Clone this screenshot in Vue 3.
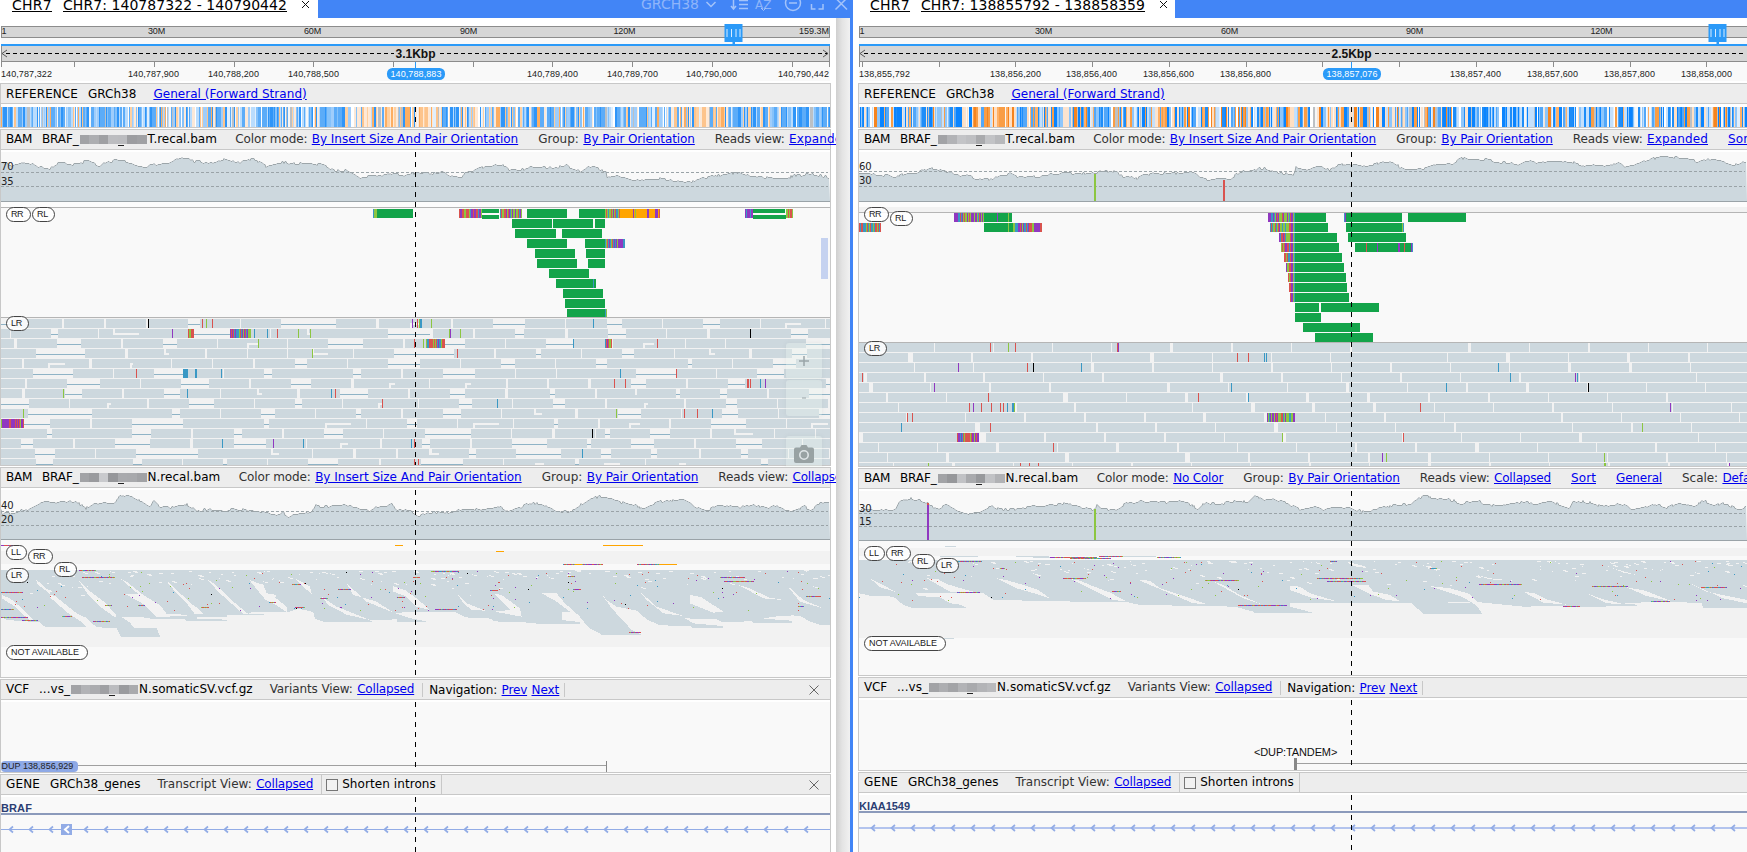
<script setup>
const C = { r: '#d9534f', g: '#8cc641', b: '#3a98c4', p: '#9038c0', k: '#000000', G: '#13a44a', o: '#ffa500', a: '#cdd8de', w: '#f2f2f2', l: '#8fb3c6' }

// Spreads glyphs so that a run is as wide as one with whole-pixel advances.
const vSnap = {
  mounted(el) {
    const cs = getComputedStyle(el)
    const text = el.textContent
    if (!text.length) return
    const ctx = document.createElement('canvas').getContext('2d')
    ctx.font = `${cs.fontWeight} ${cs.fontSize} ${cs.fontFamily}`
    let diff = 0
    for (const ch of text) {
      const w = ctx.measureText(ch).width
      diff += Math.round(w) - w
    }
    el.style.letterSpacing = (diff / text.length).toFixed(3) + 'px'
  },
}

function rng(seed) {
  let s = seed
  return () => {
    s = (s * 1664525 + 1013904223) % 4294967296
    return s / 4294967296
  }
}

// Collects rectangles and groups them in one path per colour run.
function layer() {
  const out = []
  return {
    out,
    rect(color, x, y, w, h) {
      const d = `M${x} ${y}h${w}v${h}h${-w}z`
      const last = out[out.length - 1]
      if (last && last.f === color) last.d += d
      else out.push({ f: color, d })
    },
    poly(color, pts) {
      out.push({ f: color, d: 'M' + pts.map((p) => p.join(' ')).join('L') + 'z' })
    },
  }
}

const parse = (ox, oy, text) => text.trim().split(/\s+/).map((t) => {
  const [x, y] = t.split(',').map(Number)
  return [(x + ox) / 3, y / 3 + oy]
})

function coverage(pts, base, x0, x1, seed) {
  const rand = rng(seed)
  const line = []
  let i = 0
  let jitter = 0
  for (let x = x0; x < x1; x++) {
    while (i < pts.length - 2 && pts[i + 1][0] < x) i++
    const [ax, ay] = pts[i]
    const [bx, by] = pts[i + 1]
    const t = Math.max(0, Math.min(1, (x - ax) / (bx - ax || 1)))
    if (rand() < 0.4) jitter = Math.round(rand() * 2.4 - 1.2)
    line.push(`${x} ${Math.round(ay + (by - ay) * t + jitter * 0.9) + 0.5}`)
  }
  return { line: 'M' + line.join('L'), area: `M${x0} ${base}L` + line.join('L') + `L${x1} ${base}z` }
}

function mixed(L, rand, x0, x1, y, h, pool = 'rgbprgbpg') {
  for (let x = Math.round(x0); x < Math.round(x1); x++) L.rect(C[pool[Math.floor(rand() * pool.length)]], x, y, 1, h)
}

// gap notation: start-end, with a trailing n for a notch in overlapping mates
function readRows(L, rows, ox, y0, linked, yMax) {
  rows.forEach((row, i) => {
    const y = y0 + i * 10
    row.split(' ').forEach((g) => {
      const notch = g.endsWith('n')
      const [s, e] = g.replace('n', '').split('-').map((v) => Math.round((+v + ox) / 3))
      const h = Math.min(9, yMax - y)
      if (notch) {
        L.rect(C.w, s, y + (h > 5 ? 4 : 3), e - s, 2)
        L.rect(C.w, s, i % 2 ? y : y + 4, Math.min(2, e - s), 5)
      } else {
        L.rect(C.w, s, y, e - s, h)
        if (linked && e - s >= 4) L.rect(C.l, s, y + 5, e - s, 1)
      }
    })
  })
}

function snips(L, text, ox, y0, yMax) {
  text.split(' ').forEach((t) => {
    const [r, x, c, w] = t.split(':')
    const y = y0 + r * 10
    L.rect(C[c], Math.round((+x + ox) / 3), y, w ? +w : 1, Math.min(9, yMax - y))
  })
}

// ---- first alignment track, left pane ----
const readsL = layer()
{
  const L = readsL
  const rand = rng(7)
  const green = ['1131-1239 1581-1701 1737-1815', '1536-1656 1659-1779 1785-1815', '1545-1668 1686-1806', '1581-1701 1755-1815', '1605-1725 1758-1815', '1611-1731 1764-1815', '1647-1767', '1668-1788', '1689-1809', '1695-1815', '1701-1815']
  green.forEach((row, i) => row.split(' ').forEach((g) => {
    const [s, e] = g.split('-').map(Number)
    L.rect(C.G, s / 3, 209 + i * 10, (e - s) / 3, 9)
  }))
  L.rect(C.G, 482, 209, 17, 4); L.rect(C.G, 482, 215, 17, 4)
  L.rect(C.G, 753, 209, 32, 4); L.rect(C.G, 753, 215, 33, 4)
  mixed(L, rand, 373, 377, 209, 9)
  mixed(L, rand, 459, 482, 209, 9)
  mixed(L, rand, 500, 522, 209, 9, 'rggpgb')
  mixed(L, rand, 605, 620, 209, 9)
  L.rect(C.o, 620, 209, 40, 9)
  L.rect(C.p, 633, 209, 1, 9); L.rect(C.g, 635, 209, 1, 9); L.rect(C.p, 647, 209, 2, 9); L.rect(C.p, 655, 209, 3, 9); L.rect(C.r, 659, 209, 1, 9)
  mixed(L, rand, 745, 753, 209, 9, 'rppb')
  mixed(L, rand, 786, 793, 209, 9, 'rrg')
  mixed(L, rand, 605, 619, 239, 9)
  L.rect(C.p, 619, 239, 4, 9); L.rect(C.b, 623, 239, 2, 9)
  L.rect(C.b, 593, 279, 1, 9); L.rect(C.b, 605, 309, 1, 9); L.rect(C.g, 606, 309, 1, 9)
  L.rect('#f2f2f2', 1, 318, 829, 147)
  for (let i = 0; i < 15; i++) L.rect(C.a, 1, 319 + i * 10, 829, i === 14 ? 6 : 9)
  readRows(L, [
    '3-40 186-192 312-318 438-444 564-600 720-723 843-1008 1128-1137 1230-1257n', '30-33 153-174 294-297 339-417n 582-690 810-813 921-933n 1164-1299',
    '42-51 171-243 363-369 489-531 651-654 740-777n 861-864 984-1089 1209-1215', '108-255 375-384 492-507n 615-621 741-744 861-864 936-984n 1059-1062 1182-1290',
    '66-72 144-195n 267-276 390-399n 513-516 636-639 759-765 885-921 1041-1044 1164-1260', '99-219 339-342 462-549 669-672 792-816 1059-1083 1203-1209',
    '75-81 201-300 420-423 543-627 747-753 873-933 1053-1062 1167-1185n 1287-1290', '66-75 195-246 366-372 492-540 660-663 771-786n 891-900 1020-1104 1224-1230',
    '3-87 207-210 321-333n 441-447 567-642 762-765 885-906 1026-1029 1134-1149n 1254-1257', '84-276 516-540 660-663 783-825 945-948 1068-1083 1203-1209',
    '72-150 270-276 396-549 792-807 975-1053n 1098-1101 1221-1251', '141-156 396-453 573-579 702-726 846-852 972-1029 1149-1152 1275-1290',
    '63-99 219-225 345-450 570-579 702-798 918-921 1020-1044n 1140-1146 1266-1290', '105-165 285-288 408-594 813-837n 936-939 1059-1068 1188-1194 1287-1317n',
    '108-159 399-426 546-549 669-681 801-804 924-1014 1137-1143 1263-1290'], 0, 319, true, 465)
  readRows(L, [
    '63-69 189-285 405-408 531-576 696-699 819-870 990-993 1065-1113n 1185-1188', '0-9 129-135 255-282 405-414 534-588 708-711 831-840 1083-1134',
    '45-105 225-228 348-429 546-549 639-672n 765-768 885-888 1128-1200', '0-72 192-198 318-333 453-456 576-612 732-735 837-855n 957-966 1086-1131',
    '90-93 213-255 375-378 498-531 774-786 906-909 1029-1098', '39-135 255-258 378-381 618-738 858-861 981-1062',
    '105-123n 228-234 351-357 474-483 603-648 768-774 894-945 1188-1200', '60-105 225-234 360-375 495-501 615-621n 738-750 870-891 1011-1017 1137-1200',
    '87-126 246-249 369-405 525-531 642-654n 762-768 888-921 1041-1044 1194-1200', '39-93 213-216 312-336n 435-444 564-633 753-756 876-924 1044-1047 1167-1200',
    '81-84 129-207n 249-252 372-384 504-510 597-630n 717-723 843-948 1068-1071 1143-1194n', '0-123 243-246 366-375 495-498 525-540 660-720 840-846 912-969n 1032-1035 1155-1158',
    '120-126 246-351 471-483 603-672 792-798 918-996 1116-1119', '0-27n 117-138 258-393 513-543 663-681 807-813 933-954 1074-1077 1197-1200',
    '0-99 219-222 315-342n 435-447 522-570n 645-648 747-768n 993-1014'], 1290, 319, true, 465)
  snips(L, '0:444:k 0:606:r 0:618:g 0:636:r 0:1236:p 0:1251:r 0:1257:g 0:1260:b:2 0:1293:g 1:516:p 1:762:b 1:801:b 1:831:r 1:894:g 1:930:g 2:774:g 2:1242:r 2:1269:g 3:936:g 5:408:r 5:549:b:5 5:585:b:2 5:663:b 7:189:g 7:561:b 7:993:b 7:1005:r 8:1146:r 9:69:g 12:666:b 12:819:p 12:909:b 12:1233:b 12:1242:r 14:1242:r 14:1254:r', 0, 319, 465)
  snips(L, '0:489:b 1:57:g 1:60:p 1:90:g 1:960:k 2:429:b 2:681:r 3:81:r 5:570:b 5:738:r 6:552:r 6:585:r 6:951:r:2 6:960:r 6:990:b 6:1005:p 8:201:b 9:558:g 9:762:r 9:801:r 9:846:b 11:486:k 13:456:b', 1290, 319, 465)
  mixed(L, rand, 188, 194, 329, 9, 'brrgr'); mixed(L, rand, 230, 251, 329, 9); mixed(L, rand, 426, 445, 339, 9, 'rgbbpbr')
  mixed(L, rand, 605, 612, 339, 9); mixed(L, rand, 1, 24, 419, 9, 'pppgrrb'); L.rect(C.p, 2, 419, 7, 9); L.rect(C.p, 11, 419, 4, 9)
}

// ---- first alignment track, right pane ----
const readsR = layer()
{
  const L = readsR
  const rand = rng(21)
  const green = ['2952-3036 3885-3978 4038-4206 4224-4398', '2952-3039 3885-3984 4038-4206', '3885-4011 4044-4218', '3885-4017 4065-4239', '3885-4026', '3885-4032', '3885-4038', '3885-4041', '3885-4047', '3885-3957 3963-4137', '3885-3963', '3909-4080', '3945-4119']
  green.forEach((row, i) => row.split(' ').forEach((g) => {
    const [s, e] = g.split('-').map(Number)
    L.rect(C.G, s / 3, 213 + i * 10, (e - s) / 3, 9)
  }))
  ;[3804, 3810, 3837, 3843, 3852, 3858, 3864, 3867, 3873].forEach((s, i) => {
    mixed(L, rand, s / 3, 1290, 213 + i * 10, 9, i > 1 ? 'rgpbrg' : 'gpbgrg')
    L.rect(C.r, 1290, 213 + i * 10, 1, 9); L.rect(C.p, 1291, 213 + i * 10, 2, 9); L.rect(C.g, 1293, 213 + i * 10, 1, 9); L.rect(C.b, 1294, 213 + i * 10, 1, 9)
  })
  L.rect(C.p, 954, 213, 3, 9); mixed(L, rand, 957, 984, 213, 9); mixed(L, rand, 859, 881, 223, 9, 'brgbr'); mixed(L, rand, 1013, 1034, 223, 9); L.rect(C.p, 1034, 223, 6, 9); L.rect(C.r, 1040, 223, 2, 9)
  L.rect(C.p, 997, 213, 1, 9); L.rect(C.g, 1008, 213, 1, 9); L.rect(C.g, 1008, 223, 1, 9)
  L.rect(C.b, 1344, 213, 1, 9); L.rect(C.p, 1345, 213, 1, 9); L.rect(C.g, 1402, 223, 1, 9); L.rect(C.b, 1403, 223, 1, 9)
  snips(L, '3:228:r 3:261:p 3:323:p:2 3:342:r 3:363:p 3:366:b', 3870, 213, 400)
  L.rect('#f2f2f2', 859, 343, 888, 124)
  for (let i = 0; i < 13; i++) L.rect(C.a, 859, 343 + i * 10, 888, i === 12 ? 3 : 9)
  readRows(L, ['252-255 429-432 606-609 783-786 960-969 1143-1149', '174-189 363-369 543-549 723-726 900-912 1086-1089 1263-1266', '192-195 369-372 723-732 906-912 1086-1089 1263-1269', '42-51 222-228 399-405 579-582 756-762 1110-1119 1293-1299', '57-69 240-243 417-423 597-603 951-960 1134-1137 1311-1314', '108-114 288-291 639-654 828-831 1005-1014 1188-1194', '144-147 495-501 672-678 1026-1029 1203-1215', '168-171 345-348 522-528 702-708 882-888 1059-1068 1242-1251', '375-390 738-744 915-921 1095-1098 1272-1284', '27-39 387-408 582-588 762-768 942-948 1122-1125 1299-1308', '84-87 261-264 438-447 621-624 798-807 981-987 1161-1164', '111-114 288-297 645-657 1005-1020 1194-1200', '129-132 306-315 489-492 666-669 843-849 1023-1026 1200-1203'], 2550, 343, false, 466)
  readRows(L, ['3-6 180-186 534-543 717-720 894-900 1074-1077 1251-1254', '120-123 471-474 648-660 834-837 1011-1020 1194-1200', '123-126 300-306 480-483 657-660 834-843 1017-1026 1200-1203', '153-156 330-336 510-513 687-693 867-870 1218-1221', '168-177 351-354 528-534 708-717 891-894 1068-1071 1245-1248', '48-57 231-240 414-420 594-600 774-777 951-954 1128-1134', '66-75 249-258 432-435 609-612 786-792 966-969 1146-1149 1323-1326', '105-108 282-288 462-465 813-819 993-996 1170-1173 1347-1350', '138-141 315-318 492-498 846-849 1023-1029 1203-1206', '336-342 513-516 690-693 867-876 1224-1227', '18-21 195-201 375-381 555-567 741-744 918-921 1095-1101 1275-1278', '54-60 234-240 414-423 597-600 774-777 951-954 1128-1134 1308-1311', '57-63 237-240 414-423 597-603 777-780 954-960 1134-1140 1311-1317'], 3870, 343, false, 466)
  snips(L, '0:420:r 0:474:g 0:495:r 0:801:r 0:804:p 1:1161:r 1:1194:r 1:1242:b 1:1248:b 2:324:p 2:531:r 2:549:k 2:693:b 3:36:r 4:252:p 4:1143:b 5:414:r 5:1044:r 5:1194:b 6:357:r 6:369:p 6:393:r 6:423:r 6:450:r 6:459:r 6:471:b 6:486:b:2 6:492:g 7:171:r 7:186:r 8:153:b 8:420:r 9:1296:g 10:609:r 12:234:g 12:510:r 12:537:r 12:564:r', 2550, 343, 466)
  snips(L, '2:624:b 3:660:b 3:855:p 3:861:b 4:468:b 4:894:k 6:390:r 6:1140:p 8:1056:g 9:339:r 11:276:p 11:288:g 11:942:g 12:942:g:2 12:1317:p', 3870, 343, 466)
  mixed(L, rand, 1267, 1295, 413, 9, 'rggpbpg'); mixed(L, rand, 957, 979, 433, 9, 'grbprp')
}

// ---- collapsed alignment tracks ----
function collapsed({ seed, x0, x1, top, outline, slivers, strips, gx }) {
  const L = layer()
  const rand = rng(seed)
  L.poly(C.a, [[x0, top], ...outline, [x1, top]])
  slivers.forEach((s) => L.poly(C.w, s))
  for (let i = 0; i < (x1 - x0) / 6; i++) {
    const x = Math.floor(x0 + rand() * (x1 - x0))
    const y = Math.floor(top + 1 + rand() * rand() * 28)
    L.rect(C.w, x, y, 1 + Math.floor(rand() * 4), 1)
    if (rand() < 0.3) L.rect(C.w, x + 2, y + 1, 3, 1)
  }
  for (let i = 0; i < gx; i++) {
    const x = Math.floor(x0 + rand() * (x1 - x0))
    const y = Math.floor(top + 1 + rand() * 40)
    L.rect(C['rrbpgprbgk'[Math.floor(rand() * 9.2)]], x, y, 1, 1)
  }
  strips.trim().split(/\s+/).forEach((s) => {
    const [x, y, w, c] = s.split(',')
    const sx = Math.round(x / 3)
    const sy = 460 + Math.floor(y / 3)
    if (c) L.rect(C[c], sx, sy, Math.round(w / 3), 1)
    else mixed(L, rand, sx, sx + w / 3, sy, 1, 'rpgbrp')
  })
  return L
}
const both = (a, ox, b, ox2) => [...parse(ox, 460, a), ...parse(ox2, 460, b)]

const packL = collapsed({
  seed: 5, x0: 1, x1: 830, top: 570, gx: 170,
  outline: both('3,470 20,480 118,487 135,500 258,500 235,478 262,478 290,502 350,504 362,530 480,530 470,505 402,503 390,488 362,470 430,472 465,478 555,478 562,484 680,484 680,479 590,476 590,470 680,470 680,466 830,466 740,460 760,456 865,456 895,446 940,456 945,476 975,487 1120,487 1110,481 1190,478 1190,487 1290,487 1230,474 1180,458 1290,456', 0,
    '75,455 105,472 185,476 190,484 300,488 330,492 450,492 450,486 395,480 395,470 445,468 480,505 515,524 635,524 605,510 545,445 515,402 530,420 560,440 620,452 650,478 690,496 780,498 790,504 878,504 878,498 790,490 765,475 860,478 875,486 965,484 970,488 1085,488 1085,482 1000,476 1030,470 1090,466 1115,470 1140,485 1170,494 1200,494', 1290),
  slivers: [
    parse(0, 460, '5,405 30,415 60,440 105,484 90,482 45,440 5,415'), parse(0, 460, '150,405 165,408 230,460 262,475 250,490 205,460 150,412'),
    parse(0, 460, '235,360 272,395 312,425 350,465 345,472 300,440 262,400'), parse(0, 460, '360,355 380,365 430,405 480,435 500,462 585,465 470,472 430,432 375,402 415,402'),
    parse(0, 460, '492,355 530,390 575,432 600,450 610,463 585,463 560,430 520,388'), parse(0, 460, '620,357 640,370 675,400 700,425 745,462 730,462 660,400'),
    parse(0, 460, '748,360 790,375 800,400 830,405 825,412 860,440 860,456 830,436 795,418'), parse(0, 460, '885,355 930,380 935,402 915,385'),
    parse(0, 460, '965,410 1010,440 1060,460 1110,480 1040,464 985,435'), parse(0, 460, '1040,370 1060,405 1130,425 1180,458 1100,425'),
    parse(0, 460, '1178,378 1215,390 1250,415 1290,450 1250,440 1215,408 1180,395'), parse(0, 460, '108,358 150,395 150,402 112,372'),
    parse(1290, 460, '80,398 110,430 165,452 125,450 100,430'), parse(1290, 460, '190,400 215,405 270,445 275,470 195,455 240,450'),
    parse(1290, 460, '335,400 380,400 405,430 450,470 395,470 395,455 420,455 380,425'), parse(1290, 460, '630,395 680,440 760,468 700,460 650,420'),
    parse(1290, 460, '780,405 815,412 880,455 850,458 780,430'), parse(1290, 460, '925,375 960,385 1015,412 1060,420 1000,415'), parse(1290, 460, '1070,375 1120,420 1180,445 1110,425'),
    parse(1290, 460, '1120,330 1138,330 1130,336'), parse(1290, 460, '430,330 455,330 450,338'),
  ],
  strips: '237,331,52 245,352,100 3,397,65 3,448,38 3,472,80 65,481,48 185,469,30 280,484,52 315,436,20 415,436,20 603,442,25 875,373,28 1015,388,40 885,442,30 960,415,25 808,427,22 1190,412,25 1240,352,20 1293,333,84 1470,391,24 1305,448,65 1705,349,22 1720,388,25 1887,517,35 2172,364,90 2160,352,75 2418,409,45 2395,439,18 3,256,42 1185,256,24,o 1809,256,120,o 1488,274,24,o 1689,313,120 1725,313,20,o 1911,313,66 1977,313,54,o',
})

const packR = collapsed({
  seed: 11, x0: 859, x1: 1747, top: 560, gx: 150,
  outline: both('27,400 60,407 130,410 160,435 185,443 350,443 325,432 300,430 270,412 205,408 195,398 400,400 430,420 600,423 680,425 830,426 870,435 1060,438 1155,440 1210,455 1215,459 1320,459', 2550,
    '68,458 20,445 0,440 0,428 300,428 365,430 400,461 575,461 565,442 545,425 600,430 700,440 800,438 870,442 1058,436 1000,430 1130,424 1235,430 1240,443 1371,443', 3870),
  slivers: [
    parse(2550, 460, '230,355 265,358 290,372 350,390 395,400 300,395'), parse(2550, 460, '440,355 475,362 520,375 565,390 600,415 560,402 500,385'),
    parse(2550, 460, '665,358 690,362 720,375 780,398 830,424 790,420 740,395'), parse(2550, 460, '865,360 900,362 930,385 1000,408 1070,432 1030,430 960,400'),
    parse(2550, 460, '1090,365 1120,375 1170,405 1240,435 1180,415'), parse(2550, 460, '60,355 100,375 135,395 90,382'),
    parse(3870, 460, '0,378 30,380 60,400 100,412 140,424 60,412 0,390'), parse(3870, 460, '185,375 235,375 250,395 300,405 330,424 290,420 240,402'),
    parse(3870, 460, '420,378 480,385 540,402 560,425 620,434 560,436 515,410'), parse(3870, 460, '475,426 540,426 540,429 475,429'),
    parse(3870, 460, '700,395 735,400 770,418 830,434 760,428'), parse(3870, 460, '890,400 940,418 1000,432 950,430'), parse(3870, 460, '1010,382 1065,392 1145,424 1070,408'),
    parse(3870, 460, '1200,370 1250,395 1371,420 1371,430 1300,415'), parse(3870, 460, '170,305 222,318 228,324 190,318'), parse(3870, 460, '560,345 600,355 670,362 600,358'),
    parse(3870, 460, '395,315 450,328 440,332'), parse(3870, 460, '920,305 970,325 1040,345 1000,338'),
  ],
  strips: '2872,304,75 3150,292,140 3210,295,122 3298,289,75 3472,292,73 3190,355,68 2872,397,68 3335,394,28 3615,361,103 3715,436,148 3950,355,138 3982,364,118 4437,373,128 4775,379,108 5103,382,78 4688,439,52 4953,424,56 4290,325,20 3990,304,22 2835,259,33,a 2820,289,114,a 3048,289,100,a 3098,292,52,a 3370,289,100,a 2800,534,62,a 3000,325,14',
})

// ---- coverage ----
const cov = {
  l1: coverage([...parse(0, 0, '3,485 40,495 65,487 100,492 125,502 150,503 175,487 210,492 240,488 260,481 300,497 320,485 345,480 375,484 395,490 415,497 440,500 460,490 480,492 510,490 535,475 565,470 580,485 600,482 620,490 650,482 670,477 690,482 720,485 740,482 755,475 775,483 800,498 830,490 850,485 880,490 930,490 960,492 985,500 1005,512 1040,508 1060,517 1080,530 1130,527 1160,522 1190,518 1210,526 1250,516 1285,519'), ...parse(1290, 0, '0,521 40,516 60,527 95,531 105,517 130,512 160,500 190,496 225,494 235,506 260,508 290,505 300,499 340,500 370,503 410,495 425,505 450,513 475,496 495,502 528,512 531,531 560,527 600,540 640,538 670,534 700,534 725,541 765,545 800,541 830,530 870,524 930,517 960,524 1000,530 1070,535 1090,526 1150,521 1180,527 1200,532')], 201, 1, 830, 3),
  r1: coverage([...parse(2550, 0, '27,520 50,518 80,524 110,525 135,532 165,518 200,516 225,507 250,503 270,507 300,515 320,525 350,525 375,533 400,537 425,536 450,523 480,520 500,529 540,526 575,529 600,522 640,516 680,519 735,520 750,514 765,511 800,515 820,528 860,534 880,522 940,518 985,519 1010,512 1035,518 1055,534 1075,538 1110,530 1140,538 1170,513 1210,507 1245,503 1270,512 1315,521'), ...parse(3870, 0, '0,520 14,522 17,502 50,506 90,500 115,508 145,495 175,490 215,495 250,493 285,482 310,486 330,500 350,508 400,504 440,490 490,488 515,473 550,478 590,478 630,485 680,492 720,484 760,486 800,484 850,485 885,498 920,495 955,496 985,485 1005,498 1030,495 1070,478 1100,472 1150,470 1180,475 1210,476 1220,487 1260,476 1290,480 1330,492 1371,484')], 201, 859, 1747, 4),
  l2: coverage(both('3,145 5,160 40,157 60,150 95,146 105,137 135,122 170,128 210,124 235,128 258,143 275,133 320,128 345,130 358,104 380,106 400,113 430,127 450,135 462,120 482,142 520,142 560,132 580,143 590,152 630,145 670,152 700,145 750,150 800,158 840,166 848,156 868,170 885,162 935,155 945,136 980,138 1020,134 1075,142 1110,150 1130,138 1175,132 1190,146 1240,155 1255,166 1285,154', 0, '0,157 60,157 100,146 130,148 185,143 215,140 235,155 270,143 280,133 330,128 350,137 378,156 435,150 450,134 480,115 515,107 550,113 575,127 600,128 640,145 690,123 740,120 780,122 795,138 830,151 865,134 930,140 970,135 1000,142 1040,137 1060,145 1090,151 1125,138 1140,150 1165,130 1200,124', 1290), 539, 1, 830, 5),
  r2: coverage(both('27,148 60,148 90,147 110,151 135,148 150,125 180,113 210,120 235,127 260,148 288,131 325,153 360,163 390,155 425,138 450,147 500,147 540,137 570,136 620,131 650,129 690,142 730,148 740,134 755,147 800,146 830,128 880,123 940,126 990,124 1020,131 1045,146 1065,127 1110,130 1150,123 1195,122 1215,106 1240,120 1270,118 1290,123 1318,128', 2550, '0,133 30,148 70,140 100,147 140,140 170,143 220,153 260,146 300,137 360,130 400,107 440,113 490,120 510,129 570,121 580,133 640,135 700,123 740,130 790,125 838,142 848,121 910,127 930,137 1010,131 1025,148 1100,132 1130,144 1160,128 1215,138 1240,121 1270,132 1300,130 1345,145 1371,140', 3870), 540, 859, 1747, 6),
}

// ---- reference sequence ----
function sequence(seed, x0, x1, bias, strong) {
  const L = layer()
  const rand = rng(seed)
  const blue = strong ? ['#0a84ff', '#52a7f9', '#8ec6fb', '#c4e0fc', '#1e8df8'] : ['#2f95f8', '#5cacf8', '#86c2fa', '#b9dcfd', '#5cacf8', '#9fcdfb']
  const orange = strong ? ['#f5841f', '#ffb066', '#ffdfc2', '#fbe3cf', '#f99d45'] : ['#fdae61', '#ffd0a0', '#ffe9d6', '#fdc48c', '#fbe8d8']
  const neutral = ['#ffffff', '#bcc0c4', '#e0effd', '#f6f6f6']
  for (let x = x0; x < x1;) {
    const seg = bias.find((b) => x < b[0]) || bias[bias.length - 1]
    const q = rand()
    const set = q < 0.14 ? neutral : rand() < seg[1] ? orange : blue
    const w = Math.min(x1 - x, 1 + Math.floor(rand() * rand() * 3.4))
    L.rect(set[Math.floor(rand() * set.length)], x, 107, w, 20)
    x += w
  }
  return L
}
const seqL = sequence(31, 1, 830, [[60, 0.12], [155, 0.15], [215, 0.4], [290, 0.15], [345, 0.12], [440, 0.7], [455, 0.3], [500, 0.6], [560, 0.25], [640, 0.12], [665, 0.5], [725, 0.75], [770, 0.3], [830, 0.15]], false)
const seqR = sequence(77, 859, 1747, [[875, 0.4], [960, 0.3], [1016, 0.75], [1030, 0.2], [1150, 0.45], [1300, 0.45], [1380, 0.45], [1450, 0.35], [1600, 0.12], [1747, 0.25]], true)

const gray = (n, seed) => {
  const rand = rng(seed)
  return Array.from({ length: n }, () => {
    const v = 150 + Math.floor(rand() * 52)
    return `rgb(${v},${v + 1},${v + 4})`
  })
}

const link = (label, text) => ({ label, link: text })
const range = (a, b, s) => { const o = []; for (let v = a; v < b; v += s) o.push(v); return o }

const panes = [
  {
    id: 'left', x0: 1, x1: 830, tab: 'CHR7: 140787322 - 140790442', mid: 415,
    chrom: [[156.5, '30M'], [312.5, '60M'], [468.5, '90M'], [624.5, '120M']], chromEnd: '159.3M', handle: 725,
    span: '3.1Kbp', ticks: [1, 74, 154, 234, 313, 393, 473, 552, 632, 712, 792, 829],
    first: '140,787,322', last: '140,790,442',
    labels: [[153.5, '140,787,900'], [233.5, '140,788,200'], [313.5, '140,788,500'], [552.5, '140,789,400'], [632.5, '140,789,700'], [711.5, '140,790,000']],
    badge: [387, '140,788,883'],
    tracks: [
      { type: 'ref', y: 104, h: 23, name: 'REFERENCE', file: 'GRCh38', items: [link('', 'General (Forward Strand)')], seq: seqL.out },
      { type: 'bam', y: 150, h: 315, name: 'BAM', file: 'BRAF_', mosaic: gray(7, 2), tail: 'T.recal.bam', items: [link('Color mode:', 'By Insert Size And Pair Orientation'), link('Group:', 'By Pair Orientation'), link('Reads view:', 'Expanded')], cov: cov.l1, base: 201, guides: [172.5, 186.5], axis: [[170, '70'], [185, '35']], bands: [[202, 5, '#fcfcfc']], lines: [207, 317], reads: readsL.out, pills: [[6, 207, 25, 'RR'], [32, 207, 23, 'RL'], [6, 316, 23, 'LR']], controls: true },
      { type: 'bam', y: 488, h: 189, name: 'BAM', file: 'BRAF_', mosaic: gray(7, 9), tail: 'N.recal.bam', items: [link('Color mode:', 'By Insert Size And Pair Orientation'), link('Group:', 'By Pair Orientation'), link('Reads view:', 'Collapsed')], cov: cov.l2, base: 539, guides: [511.5, 525.5], axis: [[509, '40'], [523, '20']], bands: [[551, 13, '#f2f2f2'], [570, 77, '#f2f2f2']], lines: [], reads: packL.out, pills: [[6, 545, 21, 'LL'], [28, 549, 25, 'RR'], [54, 562, 23, 'RL'], [6, 568, 23, 'LR'], [6, 645, 82, 'NOT AVAILABLE']] },
      { type: 'vcf', y: 700, h: 72, name: 'VCF', file: '...vs_', mosaic: gray(7, 14), tail: 'N.somaticSV.vcf.gz', items: [link('Variants View:', 'Collapsed')], close: true },
      { type: 'gene', y: 795, h: 57, name: 'GENE', file: 'GRCh38_genes', items: [link('Transcript View:', 'Collapsed')], close: true, gene: 'BRAF', gy: 812, arrows: range(11, 830, 20).map((v) => (v > 60 ? v - 5 : v)).filter((v) => v < 60 || v > 80), ay: 829.5 },
    ],
  },
  {
    id: 'right', x0: 859, x1: 1747, tab: 'CHR7: 138855792 - 138858359', mid: 1351,
    chrom: [[1043.5, '30M'], [1229.5, '60M'], [1414.5, '90M'], [1601.5, '120M']], handle: 1709,
    span: '2.5Kbp', ticks: [859, 862, 939, 1015, 1092, 1169, 1246, 1322, 1399, 1476, 1553, 1630, 1706],
    first: '138,855,792',
    labels: [[1015.5, '138,856,200'], [1091.5, '138,856,400'], [1168.5, '138,856,600'], [1245.5, '138,856,800'], [1475.5, '138,857,400'], [1552.5, '138,857,600'], [1629.5, '138,857,800'], [1706.5, '138,858,000']],
    badge: [1323, '138,857,076'],
    tracks: [
      { type: 'ref', y: 104, h: 23, name: 'REFERENCE', file: 'GRCh38', items: [link('', 'General (Forward Strand)')], seq: seqR.out },
      { type: 'bam', y: 150, h: 316, name: 'BAM', file: 'BRAF_', mosaic: gray(7, 3), tail: 'T.recal.bam', items: [link('Color mode:', 'By Insert Size And Pair Orientation'), link('Group:', 'By Pair Orientation'), link('Reads view:', 'Expanded'), link('', 'Sort')], cov: cov.r1, base: 201, guides: [171.5, 186.5], axis: [[170, '60'], [184, '30']], bars: [[1094, 174, 27, C.g], [1223, 180, 21, C.r]], bands: [[202, 5, '#fcfcfc'], [207, 5, '#f2f2f2']], lines: [212, 342], reads: readsR.out, pills: [[864, 207, 25, 'RR'], [890, 211, 23, 'RL'], [864, 341, 23, 'LR']] },
      { type: 'bam', y: 489, h: 186, name: 'BAM', file: 'BRAF_', mosaic: gray(7, 19), tail: 'N.recal.bam', items: [link('Color mode:', 'No Color'), link('Group:', 'By Pair Orientation'), link('Reads view:', 'Collapsed'), link('', 'Sort'), link('', 'General'), link('Scale:', 'Default')], cov: cov.r2, base: 540, guides: [513.5, 526.5], axis: [[512, '30'], [525, '15']], bars: [[927, 505, 35, C.p], [927, 503, 2, C.r], [1094, 509, 31, C.g]], bands: [[548, 8, '#f2f2f2'], [560, 78, '#f2f2f2']], lines: [], reads: packR.out, pills: [[864, 546, 21, 'LL'], [886, 546, 25, 'RR'], [912, 554, 23, 'RL'], [936, 558, 23, 'LR'], [864, 636, 82, 'NOT AVAILABLE']] },
      { type: 'vcf', y: 698, h: 72, name: 'VCF', file: '...vs_', mosaic: gray(7, 24), tail: 'N.somaticSV.vcf.gz', items: [link('Variants View:', 'Collapsed')] },
      { type: 'gene', y: 793, h: 59, name: 'GENE', file: 'GRCh38_genes', items: [link('Transcript View:', 'Collapsed')], gene: 'KIAA1549', gy: 810, arrows: range(873, 1747, 20), ay: 828 },
    ],
  },
]
</script>

<template>
  <div class="browser">
    <section v-for="p in panes" :key="p.id" class="pane" :class="p.id">
      <div class="topbar">
        <div class="tab">
          <span v-snap class="chr">CHR7</span><span v-snap class="chr pos">{{ p.tab }}</span>
          <svg class="tabx" width="9" height="9" viewBox="0 0 9 9"><path d="M1 1l7 7M8 1l-7 7" stroke="#111" fill="none" /></svg>
        </div>
        <div v-if="p.id === 'left'" class="tools">
          <span class="build">GRCH38</span>
          <svg width="150" height="18" viewBox="702 0 150 18" fill="none" stroke="#a3c3fa" stroke-width="1.5">
            <path d="M706.500 2l4.500 4.500l4.500-4.500" />
            <path d="M733.500 0v8M731 6l2.500 3l2.500-3M739 0.500h9M739 4.500h9M739 8.500h9" />
            <text x="755" y="8.500" class="az">AZ</text>
            <path d="M761 8l2.500 2.500l2.500-2.500" stroke-width="1" />
            <circle cx="793" cy="3" r="7.500" /><path d="M789 3h8" />
            <path d="M811.500 4v5h4M818.500 9h4.500v-5" />
            <path d="M835.500-2l11.500 11.500M847-2l-11.500 11.500" />
          </svg>
        </div>
      </div>
      <div class="body">
        <div class="content">
          <svg class="ruler" :width="p.x1 - p.x0" height="65" :viewBox="`${p.x0} 18 ${p.x1 - p.x0} 65`">
            <rect :x="p.x0" y="38" :width="p.x1 - p.x0" height="43" fill="#f9f9f9" />
            <rect :x="p.x0 + 0.5" y="26.5" :width="p.x1 - p.x0 - (p.id === 'left' ? 1 : -5)" height="11" fill="#d6d6d6" stroke="#8c8c8c" />
            <text :x="p.x0 + 0.5" y="34" class="num">1</text>
            <text v-for="c in p.chrom" :key="c[1]" v-snap :x="c[0]" y="34" class="num" text-anchor="middle">{{ c[1] }}</text>
            <text v-if="p.chromEnd" v-snap x="829" y="34" class="num" text-anchor="end">{{ p.chromEnd }}</text>
            <rect :x="p.handle - 0.5" y="24" width="18" height="18" fill="#2b9af8" />
            <path :d="`M${p.handle + 2} 29v8M${p.handle + 6.5} 29v8M${p.handle + 11} 29v8M${p.handle + 15} 29v8`" stroke="#d9edff" stroke-width="1" />
            <rect :x="p.handle + 7.5" y="42" width="2.5" height="3" fill="#2b9af8" />
            <rect :x="p.x0 + 0.5" y="45.500" :width="p.x1 - p.x0 - (p.id === 'left' ? 1 : -5)" height="16" fill="#d6d6d6" stroke="#8c8c8c" />
            <rect :x="p.x0" y="44" :width="p.x1 - p.x0" height="2" fill="#2b9af8" />
            <path :d="`M${p.x0 + 5} 53.500H${p.x1 - 2}`" stroke="#000" stroke-dasharray="4 3" />
            <path :d="`M${p.x0 + 6} 50l-5 3.500l5 3.500`" fill="none" stroke="#555" />
            <path v-if="p.id === 'left'" d="M823 50l5 3.500l-5 3.500" fill="none" stroke="#555" />
            <rect :x="p.mid - 21" y="48" width="43" height="12" fill="#d6d6d6" />
            <text :x="p.mid + 0.5" y="58" class="span" text-anchor="middle">{{ p.span }}</text>
            <rect v-for="t in p.ticks" :key="t" :x="t" y="62" width="1" height="5" fill="#8c8c8c" />
            <rect :x="p.mid" y="62" width="1" height="6" fill="#2b9af8" />
            <text v-snap :x="p.x0" y="77" class="num">{{ p.first }}</text>
            <text v-for="c in p.labels" :key="c[1]" v-snap :x="c[0]" y="77" class="num" text-anchor="middle">{{ c[1] }}</text>
            <text v-if="p.last" v-snap x="829" y="77" class="num" text-anchor="end">{{ p.last }}</text>
            <rect :x="p.badge[0]" y="68" width="58" height="12" rx="5.500" fill="#2b9af8" />
            <text v-snap :x="p.badge[0] + 29" y="77" class="num white" text-anchor="middle">{{ p.badge[1] }}</text>
          </svg>

          <div v-for="(t, i) in p.tracks" :key="i" class="track" :class="t.type">
            <div class="head">
              <span v-snap class="name">{{ t.name }}</span>
              <span class="file"><span v-snap>{{ t.file }}</span><span v-if="t.mosaic" class="mosaic"><i v-for="(m, k) in t.mosaic" :key="k" :style="{ background: m }"></i><b></b></span><span v-if="t.tail" v-snap>{{ t.tail }}</span></span>
              <span v-for="it in t.items" :key="it.link" class="item"><span v-if="it.label" v-snap class="label">{{ it.label }}</span><a v-snap>{{ it.link }}</a></span>
              <span v-if="t.type === 'vcf'" class="group nav"><span v-snap>Navigation:</span><a v-snap>Prev</a><a v-snap>Next</a></span>
              <span v-if="t.type === 'gene'" class="group check"><i class="box"></i><span v-snap>Shorten introns</span></span>
              <svg v-if="t.close" class="close" width="10" height="10" viewBox="0 0 10 10"><path d="M.5 .5l9 9M9.500 .5l-9 9" stroke="#666" fill="none" /></svg>
            </div>
            <svg class="plot" :width="p.x1 - p.x0" :height="t.h" :viewBox="`${p.x0} ${t.y} ${p.x1 - p.x0} ${t.h}`">
              <rect :x="p.x0" :y="t.y" :width="p.x1 - p.x0" height="2" fill="#fff" />
              <template v-if="t.type === 'ref'">
                <rect :x="p.x0" :y="t.y" :width="p.x1 - p.x0" height="3" fill="#fff" />
                <path v-for="(s, k) in t.seq" :key="k" :d="s.d" :fill="s.f" shape-rendering="crispEdges" />
              </template>
              <template v-if="t.type === 'bam'">
                <rect v-for="b in t.bands" :key="b[0]" :x="p.x0" :y="b[0]" :width="p.x1 - p.x0" :height="b[1]" :fill="b[2]" />
                <path :d="t.cov.area" fill="#cdd8de" /><path :d="t.cov.line" fill="none" stroke="#9da6aa" />
                <path v-for="g in t.guides" :key="g" :d="`M${p.x0} ${g}H${p.x1 - 2}`" stroke="#9aa3a7" stroke-dasharray="3 2" />
                <rect v-for="b in t.bars" :key="b[0] + b[1]" :x="b[0]" :y="b[1]" width="2" :height="b[2]" :fill="b[3]" />
                <rect :x="p.x0" :y="t.base" :width="p.x1 - p.x0" height="1" fill="#9aa3a8" />
                <text v-for="a in t.axis" :key="a[1]" :x="p.x0" :y="a[0]" class="axis">{{ a[1] }}</text>
                <path v-for="(s, k) in t.reads" :key="k" :d="s.d" :fill="s.f" shape-rendering="crispEdges" />
                <rect v-for="l in t.lines" :key="l" :x="p.x0" :y="l" :width="p.x1 - p.x0" height="1" fill="#b5b5b5" />
                <g v-for="l in t.pills" :key="l[3]">
                  <rect :x="l[0] + 0.5" :y="l[1] + 0.5" :width="l[2] - 1" height="14" rx="7" fill="#fff" fill-opacity="0.85" stroke="#444" />
                  <text v-snap :x="l[0] + 5" :y="l[1] + 10" class="num">{{ l[3] }}</text>
                </g>
                <rect v-if="t.controls" x="821" y="238" width="7" height="41" fill="#c5d2f0" />
              </template>
              <template v-if="t.type === 'vcf' && p.id === 'left'">
                <rect x="77" y="765" width="530" height="1" fill="#a0a0a0" /><rect x="606" y="761" width="1" height="11" fill="#888" />
                <rect x="1" y="761" width="77" height="11" rx="4" fill="#8ea9e6" /><text v-snap x="1.500" y="769" class="num">DUP 138,856,929</text>
              </template>
              <template v-if="t.type === 'vcf' && p.id === 'right'">
                <rect x="1294" y="763" width="453" height="1" fill="#a0a0a0" /><rect x="1294" y="758" width="3" height="12" fill="#888" />
                <text v-snap x="1254" y="756" class="dup">&lt;DUP:TANDEM&gt;</text>
              </template>
              <template v-if="t.type === 'gene'">
                <rect :x="p.x0" :y="t.gy + 1" :width="p.x1 - p.x0" height="2" fill="#8b9abb" />
                <text v-snap :x="p.x0" :y="t.gy" class="symbol">{{ t.gene }}</text>
                <path :d="`M${p.x0} ${t.ay}H${p.x1}`" :stroke="p.id === 'left' ? '#92ace6' : '#b3c4ee'" :stroke-width="p.id === 'left' ? 1 : 2" />
                <path v-for="a in t.arrows" :key="a" :d="`M${a + 2} ${t.ay - 3}l-3.500 3l3.500 3`" fill="none" stroke="#92ace6" stroke-width="1.700" />
                <g v-if="p.id === 'left'"><rect x="61" y="824" width="11" height="11" fill="#92ace6" /><path d="M69 826l-4 3.500l4 3.500" fill="none" stroke="#fff" stroke-width="2" /></g>
              </template>
              <path :d="`M${p.mid + 0.5} ${t.y + (t.type === 'ref' ? 3 : 2)}V${t.y + t.h}`" stroke="#000" stroke-dasharray="5 5" />
            </svg>
            <div v-if="t.controls" class="controls">
              <div class="ctl"><svg width="10" height="10"><path d="M5 0v10M0 5h10" stroke="#9aa5a8" stroke-width="1.500" /></svg></div>
              <div class="ctl"><svg width="4" height="10"><path d="M0 5h4" stroke="#9aa5a8" /></svg></div>
              <div class="ctl cam"><svg width="20" height="18" viewBox="0 0 20 18"><path d="M2 2.500h4l1.500-2.500h5l1.500 2.500h4a2 2 0 0 1 2 2v11.500a2 2 0 0 1-2 2h-16a2 2 0 0 1-2-2v-11.500a2 2 0 0 1 2-2z" fill="#98a2a3" /><circle cx="10" cy="10" r="4.200" fill="none" stroke="#dfe5e7" stroke-width="1.600" /></svg></div>
            </div>
          </div>
        </div>
        <div v-if="p.id === 'left'" class="strip"></div>
      </div>
    </section>
  </div>
</template>

<style>
html, body { overflow: hidden; background: #fff; }
</style>

<style scoped>
.browser { display: flex; width: 1747px; height: 852px; overflow: hidden; background: #fff; font: 12px "DejaVu Sans", sans-serif; color: #000; }
.pane { display: flex; flex-direction: column; height: 852px; overflow: hidden; }
.left { width: 850px; border-right: 3px solid #4285f6; flex: none; }
.right { width: 894px; flex: none; }
.topbar { height: 18px; flex: none; display: flex; background: #4285f6; overflow: hidden; }
.tab { background: #fff; display: flex; align-items: flex-start; width: 318px; flex: none; padding-left: 12px; box-sizing: border-box; }
.right .tab { width: 322px; padding-left: 17px; }
.chr { font-size: 14px; line-height: 18px; margin-top: -4px; text-decoration: underline; text-underline-offset: 1px; white-space: nowrap; width: 40px; flex: none; }
.pos { margin-left: 11px; width: 224px; }
.tabx { margin-left: 14px; flex: none; }
.tools { display: flex; margin-left: 323px; color: #8fb5fa; align-items: flex-start; }
.build { font-size: 14px; width: 61px; line-height: 18px; margin-top: -5px; }
.tools svg { flex: none; }
.az { font: 12px "DejaVu Sans", sans-serif; fill: #8fb5fa; stroke: none; }
.body { display: flex; flex: 1; }
.content { width: 836px; overflow: hidden; flex: none; display: flex; flex-direction: column; }
.right .content { width: 894px; padding-left: 5px; box-sizing: border-box; }
.strip { width: 14px; background: linear-gradient(90deg, #cfcfcf, #e4e4e4 45%, #f1f1f1); }
.ruler { display: block; margin-left: 1px; flex: none; }
.track { width: 829px; border: 1px solid #c8c8c8; margin-bottom: 1px; background: #f9f9f9; flex: none; position: relative; }
.right .track { width: 888px; border-right: 0; }
.track.gene { border-bottom: 0; margin-bottom: 0; }
.head { height: 19px; background: #ededed; border-bottom: 1px solid #c8c8c8; display: flex; align-items: center; padding-left: 5px; white-space: nowrap; line-height: 19px; position: relative; }
.ref .head { height: 18px; padding-top: 1px; }
.head > * { flex: none; }
.file { margin-left: 10px; }
.item { margin-left: 20px; color: #333; }
.file + .item { margin-left: 17px; }
.bam .file + .item { margin-left: 18.5px; }
.label { margin-right: 4.4px; }
a { color: #0000ee; text-decoration: underline; }
.mosaic { display: inline-flex; position: relative; width: 67px; height: 9px; vertical-align: -1px; margin: 0 1px 0 1px; }
.mosaic i { flex: 1; }
.mosaic b { position: absolute; left: 38px; bottom: -2px; width: 6px; height: 1px; background: #222; }
.group { border-left: 1px solid #c8c8c8; border-right: 1px solid #c8c8c8; margin-left: 8px; padding: 0 5px 0 6px; line-height: 14px; }
.nav a { margin-left: 4.4px; }
.check { line-height: 19px; padding: 0 5px 0 4px; display: flex; align-items: center; }
.box { width: 10px; height: 10px; border: 1px solid #767676; background: #f2f2f2; margin-right: 4px; }
.close { position: absolute; right: 11px; top: 5px; }
.plot { display: block; }
.controls { position: absolute; right: 8px; top: 213px; display: flex; flex-direction: column; }
.ctl { width: 36px; height: 36px; margin-bottom: 1px; border-radius: 3px; background: rgba(235, 245, 240, 0.35); box-shadow: 0 0 4px rgba(120, 140, 140, 0.12); display: flex; align-items: center; justify-content: center; }
.cam { margin-top: 19px; }
.num { font: 9px "Liberation Sans", Arial, sans-serif; fill: #222; }
.white { fill: #fff; }
.span { font: bold 12px "Liberation Sans", Arial, sans-serif; fill: #111; }
.axis { font: 10px "DejaVu Sans", sans-serif; fill: #222; }
.dup { font: 11px "Liberation Sans", Arial, sans-serif; fill: #111; }
.symbol { font: bold 11px "Liberation Sans", Arial, sans-serif; fill: #2c3e73; }
</style>
